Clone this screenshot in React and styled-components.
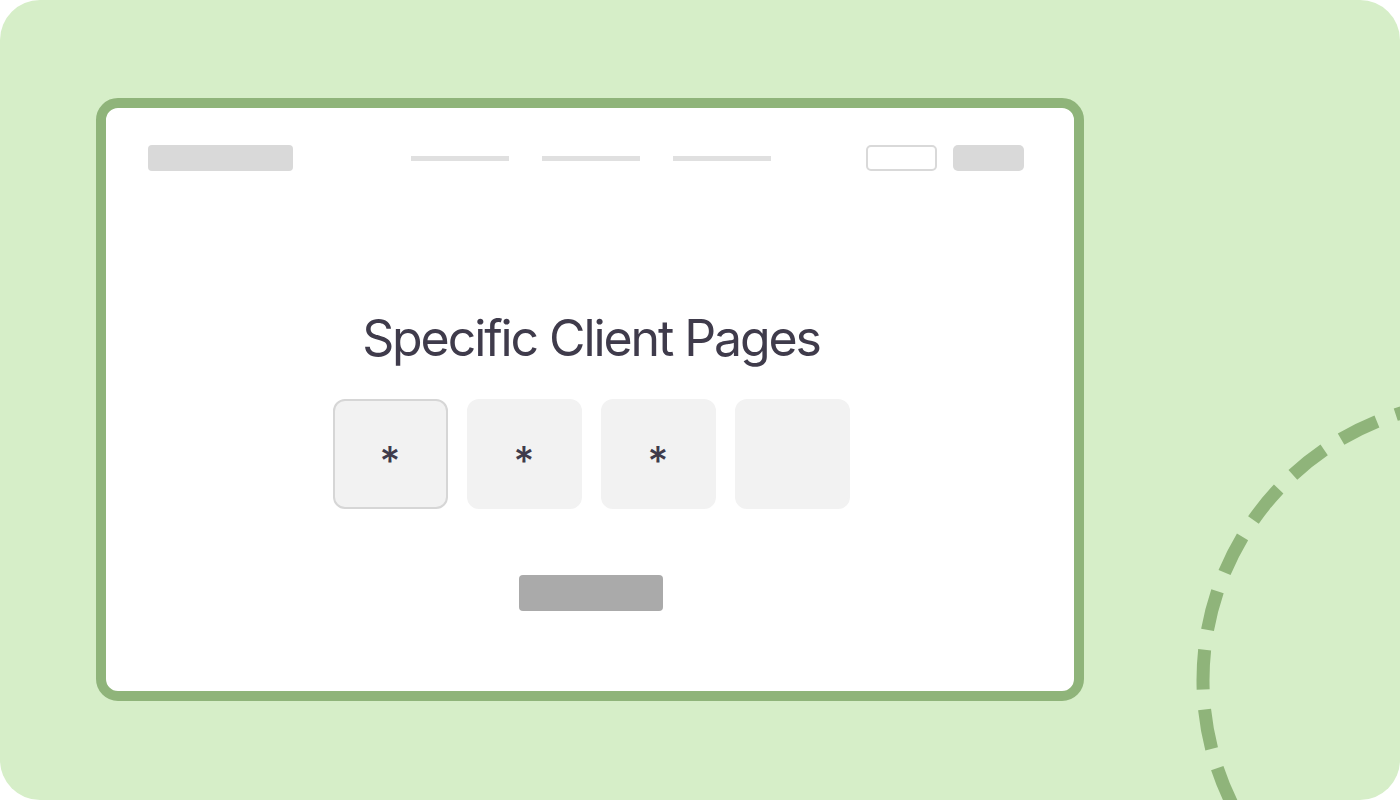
import React from "react";
import styled, { createGlobalStyle } from "styled-components";

const Global = createGlobalStyle`
  html, body { margin: 0; padding: 0; background: #ffffff; }
  body { font-family: Inter, "Noto Sans", sans-serif; }
`;

const Canvas = styled.div`
  position: relative;
  width: 1400px;
  height: 800px;
  background: #d6eec8;
  border-radius: 40px;
  overflow: hidden;
  padding: 98px 0 0 96px;
  box-sizing: border-box;
`;

const Window = styled.div`
  position: relative;
  z-index: 1;
  width: 988px;
  height: 603px;
  box-sizing: border-box;
  border: 10px solid #8fb47a;
  border-radius: 22px;
  background: #ffffff;
  display: flex;
  flex-direction: column;
`;

const NavBar = styled.div`
  display: grid;
  grid-template-columns: 1fr auto 1fr;
  align-items: center;
  padding: 37px 50px 0 42px;
  height: 26px;
  box-sizing: content-box;
`;

const Logo = styled.div`
  width: 145px;
  height: 26px;
  border-radius: 4px;
  background: #d9d9d9;
`;

const Links = styled.div`
  display: flex;
  gap: 33px;
  align-items: center;
  margin-left: 10px;
`;

const LinkLine = styled.div`
  width: 98px;
  height: 5px;
  background: #e0e0e0;
`;

const Actions = styled.div`
  display: flex;
  justify-content: flex-end;
  gap: 16px;
`;

const GhostButton = styled.div`
  width: 71px;
  height: 26px;
  box-sizing: border-box;
  border: 2px solid #d9d9d9;
  border-radius: 5px;
`;

const SolidButton = styled.div`
  width: 71px;
  height: 26px;
  border-radius: 5px;
  background: #d9d9d9;
`;

const Main = styled.div`
  display: flex;
  flex-direction: column;
  align-items: center;
  padding-top: 137px;
  padding-left: 2px;
`;

const Title = styled.h1`
  margin: 0;
  font-family: Inter, "Noto Sans", sans-serif;
  font-weight: 400;
  font-size: 50px;
  letter-spacing: -2.1px;
  line-height: 60px;
  color: #3f3b4b;
`;

const CodeRow = styled.div`
  display: flex;
  gap: 19px;
  margin-top: 31px;
`;

const CodeBox = styled.div`
  width: 115px;
  height: 110px;
  box-sizing: border-box;
  border-radius: 12px;
  background: #f2f2f2;
  border: 2px solid ${(p) => (p.$active ? "#d6d6d6" : "#f2f2f2")};
  display: flex;
  align-items: center;
  justify-content: center;
  font-family: Inter, "Noto Sans", sans-serif;
  font-size: 40px;
  font-weight: 500;
  line-height: 1;
  color: #3f3b4b;
  padding-top: 14px;
`;

const Submit = styled.div`
  margin-top: 66px;
  width: 144px;
  height: 36px;
  border-radius: 4px;
  background: #aaaaaa;
`;

const Decoration = styled.svg`
  position: absolute;
  left: 0;
  top: 0;
  pointer-events: none;
`;

export default function App() {
  return (
    <>
      <Global />
      <Canvas>
        <Window>
          <NavBar>
            <Logo />
            <Links>
              <LinkLine />
              <LinkLine />
              <LinkLine />
            </Links>
            <Actions>
              <GhostButton />
              <SolidButton />
            </Actions>
          </NavBar>
          <Main>
            <Title>Specific Client Pages</Title>
            <CodeRow>
              <CodeBox $active>*</CodeBox>
              <CodeBox>*</CodeBox>
              <CodeBox>*</CodeBox>
              <CodeBox />
            </CodeRow>
            <Submit />
          </Main>
        </Window>
        <Decoration width="1400" height="800" viewBox="0 0 1400 800">
          <circle
            cx="1482"
            cy="680"
            r="279"
            fill="none"
            stroke="#8fb47a"
            strokeWidth="13"
            strokeDasharray="40 20"
            strokeDashoffset="33.5"
          />
        </Decoration>
      </Canvas>
    </>
  );
}
